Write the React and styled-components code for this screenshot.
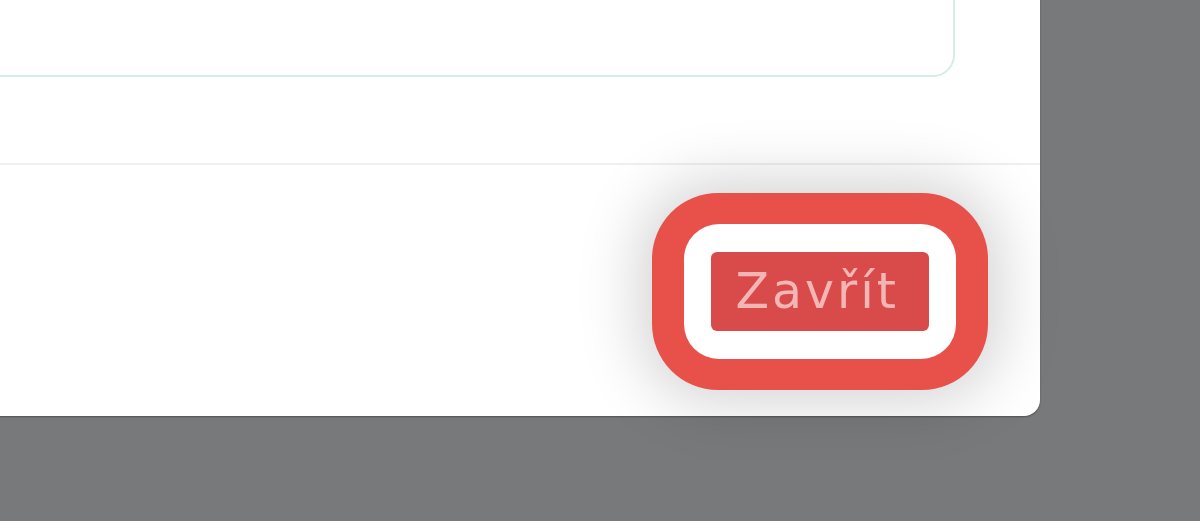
import React from "react"
import styled, { createGlobalStyle } from "styled-components"

const GlobalStyle = createGlobalStyle`
	html, body {
		margin: 0;
		padding: 0;
		height: 100%;
		overflow: hidden;
		background: #78797a;
		font-family: "DejaVu Sans", "Noto Sans", sans-serif;
	}
`

const Page = styled.div`
	width: 1200px;
	height: 521px;
	overflow: hidden;
`

const Modal = styled.div`
	width: 1080px;
	margin-left: -40px;
	margin-top: -100px;
	background: #fff;
	border-radius: 16px;
	box-shadow: 0 1px 2px rgba(0, 0, 0, 0.35);
	display: flex;
	flex-direction: column;
`

const Body = styled.div`
	padding: 30px 85px 86px 0;
`

const Field = styled.div`
	height: 147px;
	box-sizing: border-box;
	border: 2px solid #d6ece8;
	border-radius: 22px;
	background: #fff;
`

const Footer = styled.div`
	border-top: 2px solid #efefef;
	height: 253px;
	box-sizing: border-box;
	display: flex;
	align-items: center;
	justify-content: flex-end;
	padding: 0 52px 0 0;
`

// focus ring drawn around the button: red outer band, white gap
const FocusRing = styled.div`
	display: flex;
	padding: 31px 32px;
	margin-top: 2px;
	border-radius: 66px;
	background: #e8514a;
	box-shadow: 0 0 60px 14px rgba(0, 0, 0, 0.17);
`

const RingGap = styled.div`
	display: flex;
	padding: 28px 27px;
	border-radius: 35px;
	background: #fff;
`

const CloseButton = styled.button`
	height: 79px;
	padding: 0 30px 0 24px;
	border: none;
	border-radius: 6px;
	background: #d94a4a;
	color: #f3b6b4;
	font-family: "DejaVu Sans", "Noto Sans", sans-serif;
	font-size: 49px;
	letter-spacing: 3px;
	line-height: 76px;
	cursor: pointer;
`

const App = () => {
	return (
		<Page>
			<GlobalStyle />
			<Modal>
				<Body>
					<Field />
				</Body>
				<Footer>
					<FocusRing>
						<RingGap>
							<CloseButton type="button">Zavřít</CloseButton>
						</RingGap>
					</FocusRing>
				</Footer>
			</Modal>
		</Page>
	)
}

export default App
